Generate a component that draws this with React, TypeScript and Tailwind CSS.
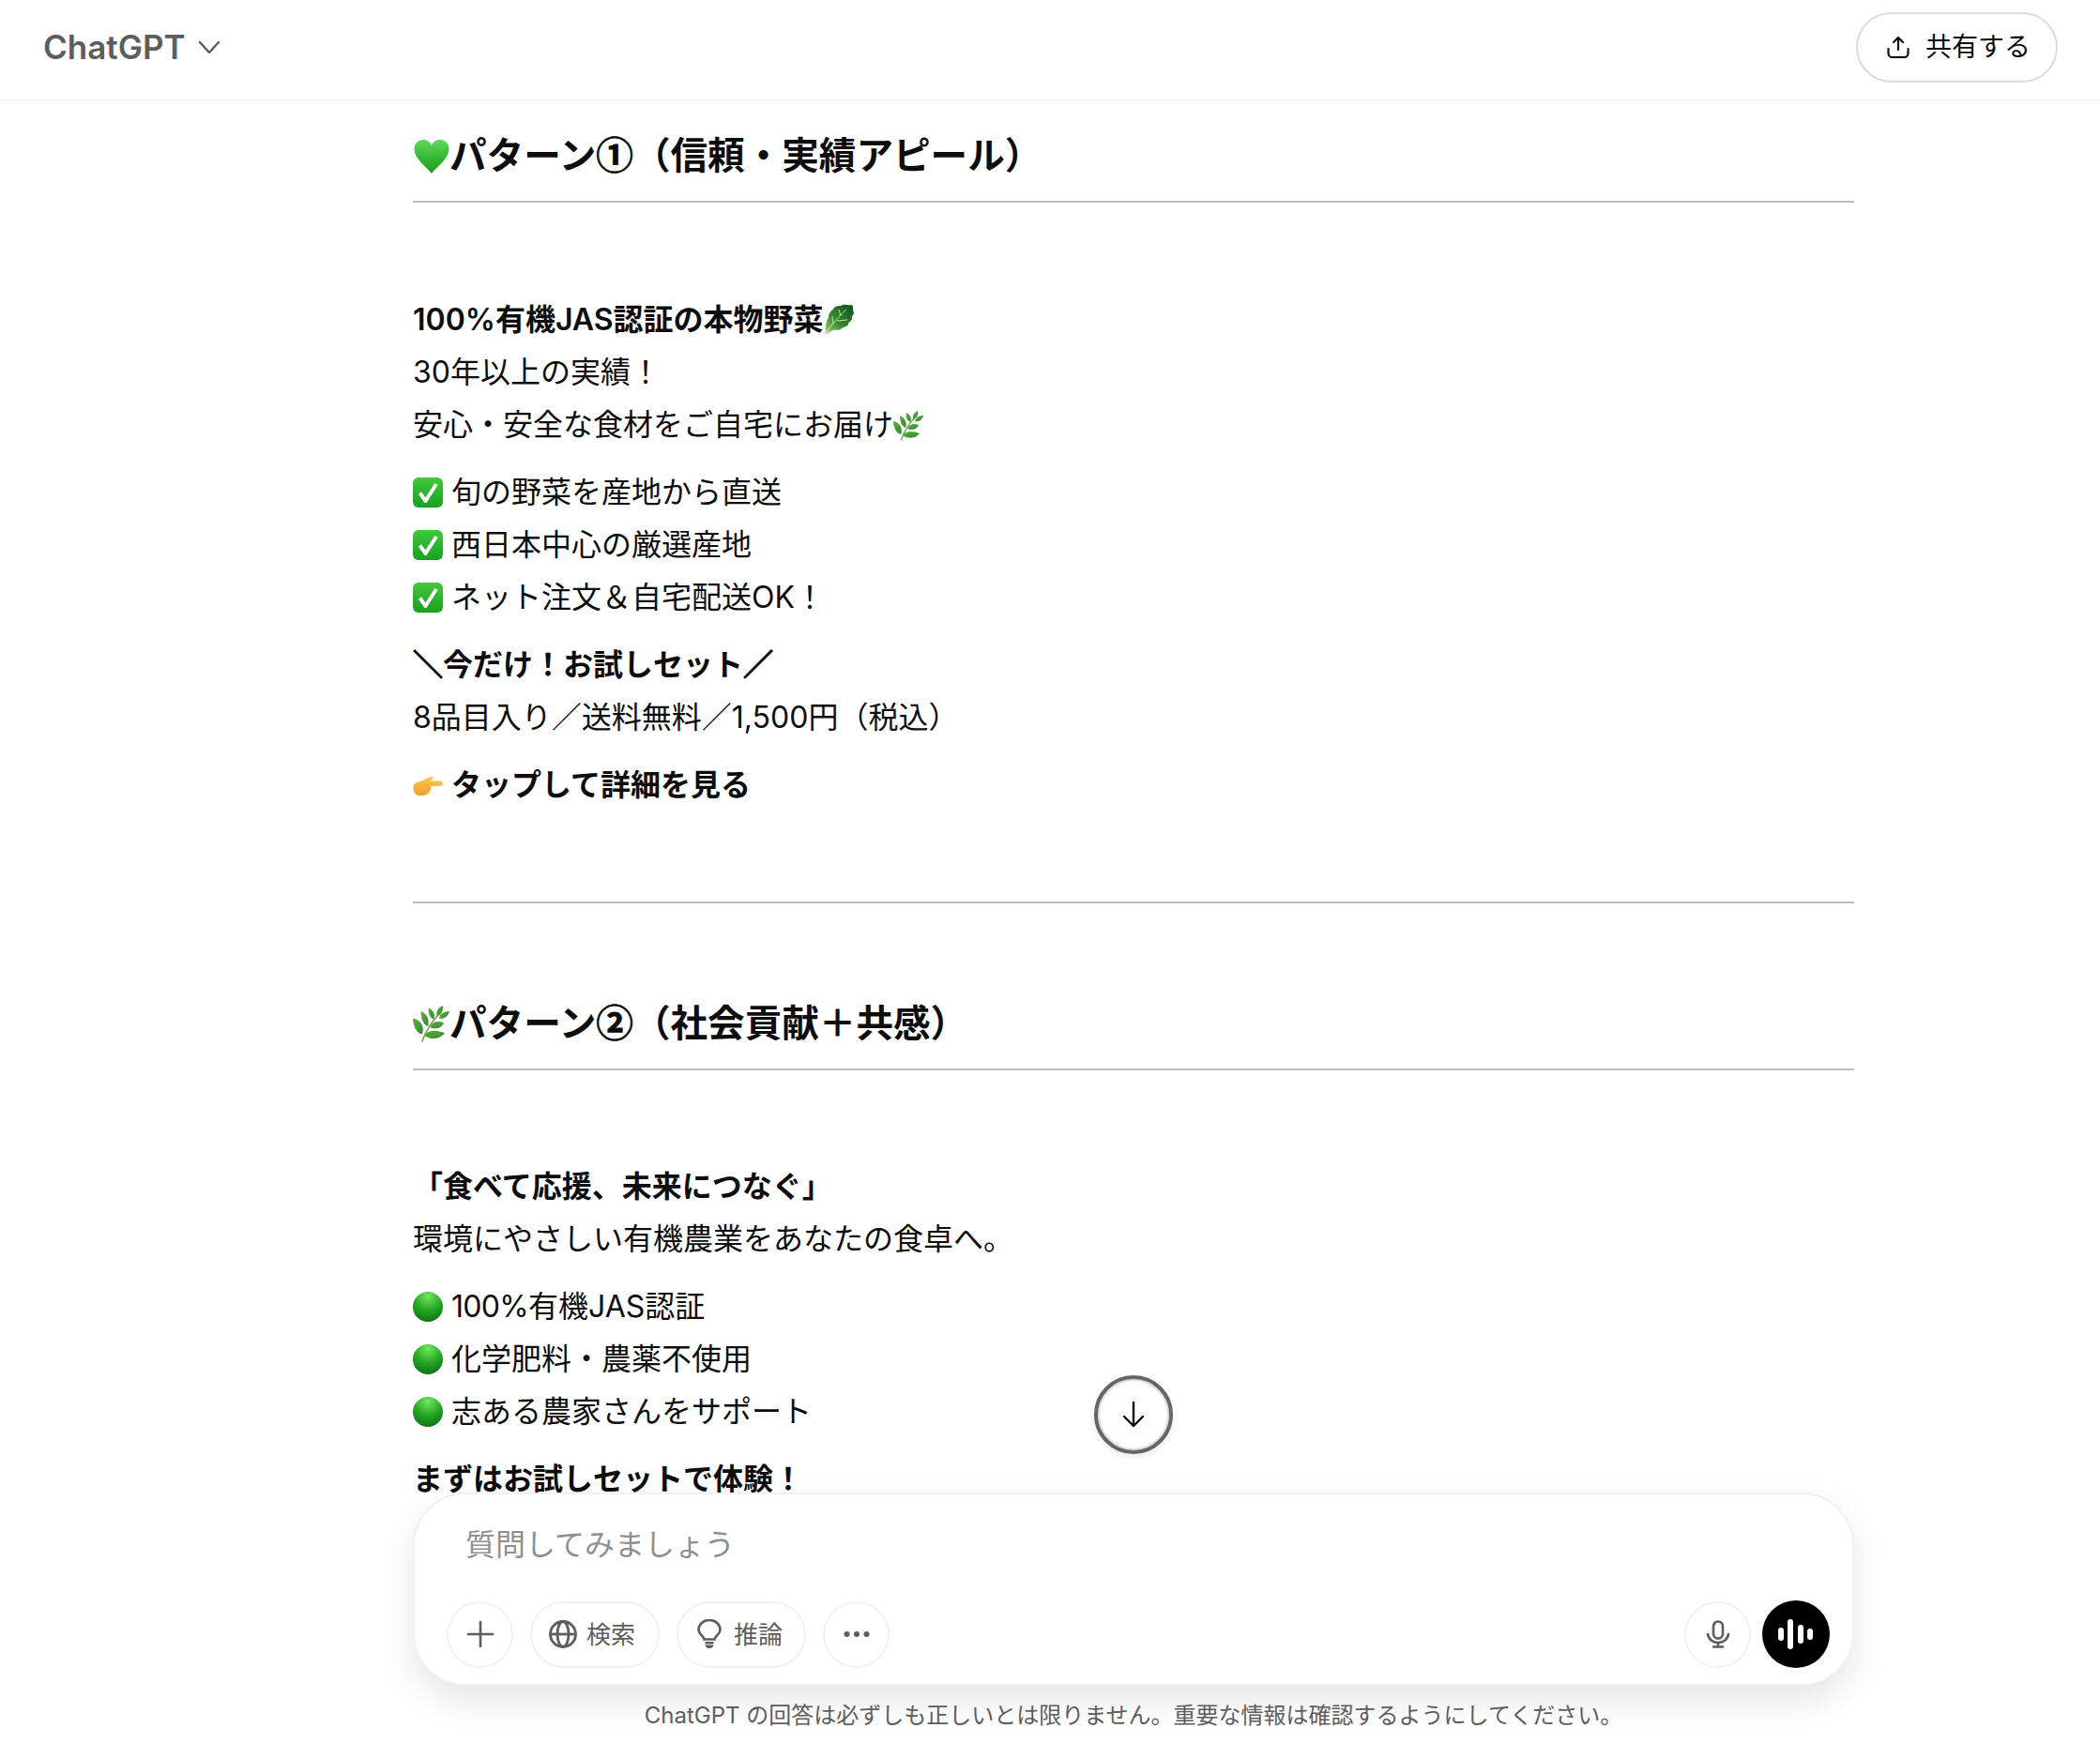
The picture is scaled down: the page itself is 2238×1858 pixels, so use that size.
import type { ReactNode } from 'react'

const circled = "font-['Noto_Sans_CJK_JP',sans-serif] leading-none [-webkit-text-stroke:0.8px_#0d0d0d]"
const heavySlash = '[-webkit-text-stroke:1.2px_#0d0d0d]'

function GreenHeart() {
  return (
    <svg viewBox="0 0 38 38" className="ml-[1px] inline-block h-[38px] w-[38px] align-[-6px]">
      <defs>
        <linearGradient id="heart" x1="0" y1="0" x2="0" y2="1">
          <stop offset="0" stopColor="#5fd85c" />
          <stop offset="0.6" stopColor="#2fb52e" />
          <stop offset="1" stopColor="#1f9a20" />
        </linearGradient>
      </defs>
      <path d="M19 37 C15 31 1 22 0.500 11 C0.200 5 5 1 10 1 C14.500 1 17.500 3.500 19 7 C20.500 3.500 23.500 1 28 1 C33 1 37.800 5 37.500 11 C37 22 23 31 19 37 Z" fill="url(#heart)" />
    </svg>
  )
}

function Lettuce() {
  return (
    <svg viewBox="0 0 32 32" className="inline-block h-8 w-8 align-[-4px]">
      <defs>
        <linearGradient id="lettuce" x1="0" y1="1" x2="1" y2="0">
          <stop offset="0" stopColor="#a9cf85" />
          <stop offset="0.4" stopColor="#3a8a36" />
          <stop offset="1" stopColor="#0f4d1a" />
        </linearGradient>
      </defs>
      <path d="M2 31 C1 25 2 19 5 14 C5 9 9 7 11 4 C14 1 17 3 20 1 C23 0 26 2 30 1 C32 4 30 6 32 9 C32 12 29 13 30 16 C29 19 26 19 26 22 C24 25 21 24 19 26 C16 29 13 27 10 28 C8 29 6 30 4 32 Z" fill="url(#lettuce)" />
      <path d="M2 31 C8 23 14 15 24 6 M10 22 L9 13 M14 18 L25 17 M18 13 L16 6" stroke="#bfe09a" strokeWidth="1" fill="none" />
      <path d="M1 32 L2 28 L6 29 L4 32 Z" fill="#d8cfa0" />
    </svg>
  )
}

function Herb({ size = 32 }: { size?: number }) {
  return (
    <svg viewBox="0 0 32 32" width={size} height={size} className="inline-block align-[-6px]">
      <defs>
        <linearGradient id="herb" x1="0" y1="0" x2="1" y2="1">
          <stop offset="0" stopColor="#5fae3f" />
          <stop offset="1" stopColor="#2f8a30" />
        </linearGradient>
      </defs>
      <path d="M8 31.500 C11 23 16 14 25 5" stroke="#7fa84a" strokeWidth="1.400" fill="none" />
      <g fill="url(#herb)">
        <path d="M8 25 C3 24 0 17 0 11 C6 12 11 18 8 25 Z" />
        <path d="M13 18 C8 16 7 10 7 5 C12 7 15 12 13 18 Z" />
        <path d="M18 12 C14 10 13 5 14 2 C18 4 20 8 18 12 Z" />
        <path d="M21 9 C20 5 22 2 26 0 C27 4 25 8 21 9 Z" />
        <path d="M23 11 C24 7 28 5 32 5 C31 9 28 12 23 11 Z" />
        <path d="M15 19 C17 14 22 13 27 15 C25 20 20 21 15 19 Z" />
        <path d="M10 26 C13 21 21 21 28 24 C23 30 15 30 10 26 Z" />
      </g>
    </svg>
  )
}

function CheckBox() {
  return (
    <svg viewBox="0 0 32 32" className="inline-block h-8 w-8 align-[-5px]">
      <defs>
        <linearGradient id="check" x1="0" y1="0" x2="0" y2="1">
          <stop offset="0" stopColor="#42c83a" />
          <stop offset="1" stopColor="#18a021" />
        </linearGradient>
      </defs>
      <rect x="0" y="0" width="32" height="32" rx="6" fill="url(#check)" />
      <path d="M7.500 16.500 L13.500 25 L25 7" stroke="#fff" strokeWidth="4" fill="none" strokeLinejoin="round" />
    </svg>
  )
}

function GreenCircle() {
  return (
    <svg viewBox="0 0 32 32" className="inline-block h-8 w-8 align-[-5px]">
      <defs>
        <radialGradient id="dot" cx="0.500" cy="0.150" r="0.900">
          <stop offset="0" stopColor="#6fe85c" />
          <stop offset="0.55" stopColor="#23a322" />
          <stop offset="1" stopColor="#0b6d14" />
        </radialGradient>
      </defs>
      <circle cx="16" cy="16" r="16" fill="url(#dot)" />
    </svg>
  )
}

function Hand() {
  return (
    <svg viewBox="0 0 32 32" className="inline-block h-8 w-8 align-[-6px]">
      <defs>
        <linearGradient id="hand" x1="0" y1="0" x2="0" y2="1">
          <stop offset="0" stopColor="#fbc94e" />
          <stop offset="1" stopColor="#ee9f2a" />
        </linearGradient>
      </defs>
      <path d="M0.500 16 C1 12 6 12 9 10.500 C12 9 15 8 19 6 C21.500 5 22.500 8 20 9.500 L17 10.500 L30 10.500 C32.500 11.500 32.500 15 30 15.500 L19 16 C20 18 19 20 18 21 C17 25 13 26 9 26 C4 27 0 23 0.500 16 Z" fill="url(#hand)" />
    </svg>
  )
}

function Line({ children, bold }: { children: ReactNode; bold?: boolean }) {
  return <div className={bold ? 'font-semibold' : ''}>{children}</div>
}

function Space() {
  return <span className="inline-block w-[9px]" />
}

function PillButton({ icon, label, className }: { icon: ReactNode; label: string; className: string }) {
  return (
    <div className={`flex h-[71px] w-[138px] items-center justify-start rounded-full border-2 border-[#f1f1f1] text-[26px] text-[#5d5d5d] ${className}`}>
      {icon}
      <span>{label}</span>
    </div>
  )
}

function IconButton({ children }: { children: ReactNode }) {
  return (
    <div className="flex h-[71px] w-[71px] items-center justify-center rounded-full border-2 border-[#f1f1f1]">
      {children}
    </div>
  )
}

export default function App() {
  return (
    <div className="relative flex h-[1858px] flex-col overflow-hidden bg-white font-['Inter','Noto_Sans_CJK_JP',sans-serif] text-[#0d0d0d]">
      <header className="flex h-[108px] shrink-0 items-center justify-between border-b-2 border-[#f2f2f2] pb-[6px] pl-[46px] pr-[45px]">
        <div className="flex items-center gap-[13px]">
          <span className="text-[35px] font-semibold text-[#5d5d5d]">ChatGPT</span>
          <svg width="24" height="16" viewBox="0 0 24 16" fill="none" stroke="#5d5d5d" strokeWidth="2.400" strokeLinecap="round" strokeLinejoin="round">
            <path d="M2 3 L12 14 L22 3" />
          </svg>
        </div>
        <div className="flex h-[75px] w-[215px] items-center justify-center gap-[17px] rounded-full border-2 border-[#dcdcdc] pl-[4px] text-[28px]">
          <svg width="24" height="24" viewBox="0 0 24 24" fill="none" stroke="#0d0d0d" strokeWidth="2.200" strokeLinecap="round" strokeLinejoin="round">
            <path d="M12 15 V2 M7 7 L12 2 L17 7" />
            <path d="M1.500 14 V19 A4 4 0 0 0 5.500 23 H18.500 A4 4 0 0 0 22.500 19 V14" />
          </svg>
          <span>共有する</span>
        </div>
      </header>

      <main className="flex-1 overflow-hidden pl-[440px] pr-[262px] text-[32px] leading-[56px]">
        <h2 className="mt-[28px] border-b-2 border-[#bdbdbd] pb-[18px] text-[39.6px] font-bold leading-[60px]">
          <GreenHeart />パターン<span className={circled}>①</span>（信頼・実績アピール）
        </h2>
        <div className="mt-[97px]">
          <Line bold>100%有機JAS認証の本物野菜<Lettuce /></Line>
          <Line>30年以上の実績！</Line>
          <Line>安心・安全な食材をご自宅にお届け<Herb /></Line>
        </div>
        <div className="mt-4">
          <Line><CheckBox /><Space />旬の野菜を産地から直送</Line>
          <Line><CheckBox /><Space />西日本中心の厳選産地</Line>
          <Line><CheckBox /><Space />ネット注文＆自宅配送OK！</Line>
        </div>
        <div className="mt-4">
          <Line bold><span className={heavySlash}>＼</span>今だけ！お試しセット<span className={heavySlash}>／</span></Line>
          <Line>8品目入り／送料無料／1,500円（税込）</Line>
        </div>
        <div className="mt-4">
          <Line bold><Hand /><Space />タップして詳細を見る</Line>
        </div>
        <hr className="mt-[96px] border-t-2 border-[#bdbdbd]" />
        <h2 className="mt-[98px] border-b-2 border-[#bdbdbd] pb-[18px] text-[39.6px] font-bold leading-[60px]">
          <Herb size={39} />パターン<span className={circled}>②</span>（社会貢献＋共感）
        </h2>
        <div className="mt-[96px]">
          <Line bold>「食べて応援、未来につなぐ」</Line>
          <Line>環境にやさしい有機農業をあなたの食卓へ。</Line>
        </div>
        <div className="mt-4">
          <Line><GreenCircle /><Space /><span className="tracking-[-0.7px]">100%</span>有機JAS認証</Line>
          <Line><GreenCircle /><Space />化学肥料・農薬不使用</Line>
          <Line><GreenCircle /><Space />志ある農家さんをサポート</Line>
        </div>
        <div className="mt-4">
          <Line bold>まずはお試しセットで体験！</Line>
          <Line>／送料無料／</Line>
        </div>
      </main>

      {/* scroll to bottom */}
      <div className="absolute left-[1166px] top-[1466px] flex h-[84px] w-[84px] items-center justify-center rounded-full border-4 border-[#666] bg-white shadow-[inset_0_0_0_2px_#dedede,0_3px_8px_rgba(0,0,0,0.08)]">
        <svg width="28" height="30" viewBox="0 0 28 30" fill="none" stroke="#0d0d0d" strokeWidth="2.400" strokeLinecap="round" strokeLinejoin="round">
          <path d="M14 2 V27 M4 17 L14 27 L24 17" />
        </svg>
      </div>

      {/* composer */}
      <div className="absolute inset-x-0 bottom-0 pl-[440px] pr-[262px]">
        <div className="flex h-[206px] flex-col justify-between rounded-[56px] border-2 border-[#f1f1f1] bg-white pb-[17px] pl-[34px] pr-[24px] pt-[26px] shadow-[0_16px_36px_rgba(0,0,0,0.1)]">
          <div className="pl-[20px] text-[32px] leading-[56px] text-[#8f8f8f]">質問してみましょう</div>
          <div className="flex items-center justify-between">
            <div className="flex items-center gap-[18px]">
              <IconButton>
                <svg width="30" height="30" viewBox="0 0 30 30" fill="none" stroke="#5d5d5d" strokeWidth="2.600" strokeLinecap="round">
                  <path d="M15 2 V28 M2 15 H28" />
                </svg>
              </IconButton>
              <PillButton
                label="検索"
                className="gap-[10px] pl-[18px]"
                icon={
                  <svg width="30" height="30" viewBox="0 0 30 30" fill="none" stroke="#5d5d5d" strokeWidth="2.800">
                    <circle cx="15" cy="15" r="13.500" />
                    <ellipse cx="15" cy="15" rx="6" ry="13.500" />
                    <path d="M2 15 H28" />
                  </svg>
                }
              />
              <PillButton
                label="推論"
                className="gap-[13px] pl-[20px]"
                icon={
                  <svg width="26" height="32" viewBox="0 0 26 32" fill="none" stroke="#5d5d5d" strokeWidth="2.600" strokeLinecap="round">
                    <path d="M7.500 21.500 C7 18 1.500 16 1.500 11 A11.500 10 0 0 1 24.500 11 C24.500 16 19 18 18.500 21.500 Z" />
                    <path d="M8.500 24 H17.500 V27 C17.500 30 15 31 13 31 C11 31 8.500 30 8.500 27 Z" fill="#5d5d5d" stroke="none" />
                    <path d="M8 27 H18" stroke="#fff" strokeWidth="1.200" />
                  </svg>
                }
              />
              <IconButton>
                <svg width="32" height="8" viewBox="0 0 32 8" fill="#5d5d5d">
                  <circle cx="5.500" cy="4" r="3" />
                  <circle cx="16" cy="4" r="3" />
                  <circle cx="26.500" cy="4" r="3" />
                </svg>
              </IconButton>
            </div>
            <div className="flex items-center gap-[12px]">
              <IconButton>
                <svg width="26" height="30" viewBox="0 0 26 30" fill="none" stroke="#5d5d5d" strokeWidth="2.600" strokeLinecap="round">
                  <rect x="8" y="1.500" width="10" height="18" rx="5" />
                  <path d="M2 15 C3 21 8 24 13 24 C18 24 23 21 24 15" />
                  <path d="M13 24 V28 M8 28.500 H18" />
                </svg>
              </IconButton>
              <div className="flex h-[72px] w-[72px] items-center justify-center rounded-full bg-black">
                <svg width="38" height="34" viewBox="0 0 38 34" fill="#fff">
                  <rect x="0" y="10" width="6" height="14" rx="3" />
                  <rect x="10" y="1" width="6" height="32" rx="3" />
                  <rect x="21" y="7" width="6" height="20" rx="3" />
                  <rect x="31" y="11" width="6" height="12" rx="3" />
                </svg>
              </div>
            </div>
          </div>
        </div>
        <div className="flex h-[61px] items-center justify-center pt-[3px] text-center text-[24px] text-[#5d5d5d]">
          ChatGPT の回答は必ずしも正しいとは限りません。重要な情報は確認するようにしてください。
        </div>
      </div>
    </div>
  )
}
